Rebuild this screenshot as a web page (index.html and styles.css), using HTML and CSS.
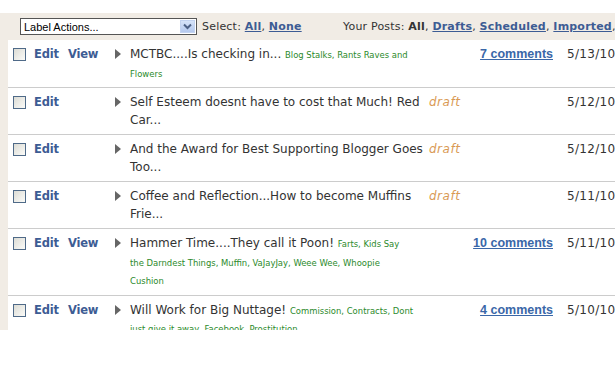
FILE: index.html
```html
<!DOCTYPE html>
<html lang="en">
<head>
  <meta charset="UTF-8">
  <title>Edit Posts</title>
  <link rel="stylesheet" href="styles.css">
</head>
<body>
  <div class="panel">
    <div class="bar">
      <div class="bar-left">
        <div class="label-select">
          <span class="label-text">Label Actions...</span>
          <span class="select-btn">
            <svg width="9" height="7" viewBox="0 0 9 7"><path d="M1 1.5 L4.5 5 L8 1.5" fill="none" stroke="#4d6185" stroke-width="2"/></svg>
          </span>
        </div>
        <span class="bar-text">Select: <a href="#">All</a>, <a href="#">None</a></span>
      </div>
      <div class="bar-right">
        Your Posts: <b>All</b>, <a href="#">Drafts</a>, <a href="#">Scheduled</a>, <a href="#">Imported</a>,
      </div>
    </div>

    <div class="posts">
      <div class="post">
        <span class="check"></span>
        <a class="act" href="#">Edit</a>
        <a class="act" href="#">View</a>
        <span class="tri"></span>
        <div class="title tagged">MCTBC....Is checking in... <span class="tags">Blog Stalks, Rants Raves and<br>Flowers</span></div>
        <span class="status"></span>
        <a class="comments" href="#">7 comments</a>
        <span class="date">5/13/10</span>
      </div>
      <div class="post">
        <span class="check"></span>
        <a class="act" href="#">Edit</a>
        <span></span>
        <span class="tri"></span>
        <div class="title">Self Esteem doesnt have to cost that Much! Red<br>Car...</div>
        <span class="status">draft</span>
        <span></span>
        <span class="date">5/12/10</span>
      </div>
      <div class="post">
        <span class="check"></span>
        <a class="act" href="#">Edit</a>
        <span></span>
        <span class="tri"></span>
        <div class="title">And the Award for Best Supporting Blogger Goes<br>Too...</div>
        <span class="status">draft</span>
        <span></span>
        <span class="date">5/12/10</span>
      </div>
      <div class="post">
        <span class="check"></span>
        <a class="act" href="#">Edit</a>
        <span></span>
        <span class="tri"></span>
        <div class="title">Coffee and Reflection...How to become Muffins<br>Frie...</div>
        <span class="status">draft</span>
        <span></span>
        <span class="date">5/11/10</span>
      </div>
      <div class="post">
        <span class="check"></span>
        <a class="act" href="#">Edit</a>
        <a class="act" href="#">View</a>
        <span class="tri"></span>
        <div class="title tagged">Hammer Time....They call it Poon! <span class="tags">Farts, Kids Say<br>the Darndest Things, Muffin, VaJayJay, Weee Wee, Whoopie<br>Cushion</span></div>
        <span class="status"></span>
        <a class="comments" href="#">10 comments</a>
        <span class="date">5/11/10</span>
      </div>
      <div class="post">
        <span class="check"></span>
        <a class="act" href="#">Edit</a>
        <a class="act" href="#">View</a>
        <span class="tri"></span>
        <div class="title tagged">Will Work for Big Nuttage! <span class="tags">Commission, Contracts, Dont<br>just give it away, Facebook, Prostitution</span></div>
        <span class="status"></span>
        <a class="comments" href="#">4 comments</a>
        <span class="date">5/10/10</span>
      </div>
    </div>
  </div>
</body>
</html>
```

FILE: styles.css
```css
body {
  margin: 0;
  padding-top: 13px;
  background-color: #fff;
  font-family: "DejaVu Sans", Verdana, sans-serif;
  font-size: 11px;
  color: #333;
}
a {
  color: #3d5c94;
  font-weight: bold;
}
.panel {
  height: 317px;
  overflow: hidden;
  background-color: #f1ece5;
}
.bar {
  display: flex;
  align-items: center;
  height: 27px;
  padding-left: 20px;
  white-space: nowrap;
  letter-spacing: 0.2px;
}
.bar-left {
  display: flex;
  align-items: center;
  width: 323px;
  flex-shrink: 0;
}
.bar-right b {
  color: #333;
}
.label-select {
  display: flex;
  align-items: center;
  justify-content: space-between;
  width: 175px;
  height: 15px;
  border: 1px solid #555;
  background-color: #fff;
  font-family: "Liberation Sans", Arial, sans-serif;
  font-size: 11px;
  letter-spacing: 0;
  color: #000;
  margin-right: 5px;
}
.label-text {
  padding-left: 3px;
}
.select-btn {
  display: flex;
  align-items: center;
  justify-content: center;
  width: 15px;
  height: 13px;
  margin-right: 1px;
  background: linear-gradient(#d6e3f8, #b5c9ee);
  border: 1px solid #c3d3f0;
  box-sizing: border-box;
}
.posts {
  margin-left: 8px;
  background-color: #fff;
  min-height: 290px;
}
.post {
  display: grid;
  grid-template-columns: 21px 34px 47px 15px 299px 40px 84px auto;
  align-items: start;
  padding: 5px 0 5px 5px;
  line-height: 18px;
  border-bottom: 1px solid #ccc;
  white-space: nowrap;
}
.check {
  display: block;
  width: 11px;
  height: 11px;
  margin-top: 3px;
  border: 1px solid #4f6a88;
  background: linear-gradient(135deg, #dcdcd5, #fbfbf8);
}
.act {
  text-decoration: none;
  font-size: 11.5px;
  letter-spacing: -0.2px;
}
.tri {
  display: block;
  width: 0;
  height: 0;
  margin-top: 4px;
  border-top: 5px solid transparent;
  border-bottom: 5px solid transparent;
  border-left: 6px solid #666;
}
.title {
  font-size: 12px;
}
.title.tagged {
  line-height: 18.5px;
}
.tags {
  font-family: "DejaVu Sans Condensed", "DejaVu Sans", sans-serif;
  font-size: 9.4px;
  line-height: 10px;
  color: #2b8a2b;
}
.status {
  font-size: 12px;
  font-style: italic;
  letter-spacing: 0.5px;
  color: #d99a55;
}
.comments {
  justify-self: end;
  font-family: "Liberation Sans", Arial, sans-serif;
  font-size: 12.5px;
  color: #3a67a8;
}
.date {
  padding-left: 14px;
  font-size: 12px;
  letter-spacing: 0.3px;
}
```
